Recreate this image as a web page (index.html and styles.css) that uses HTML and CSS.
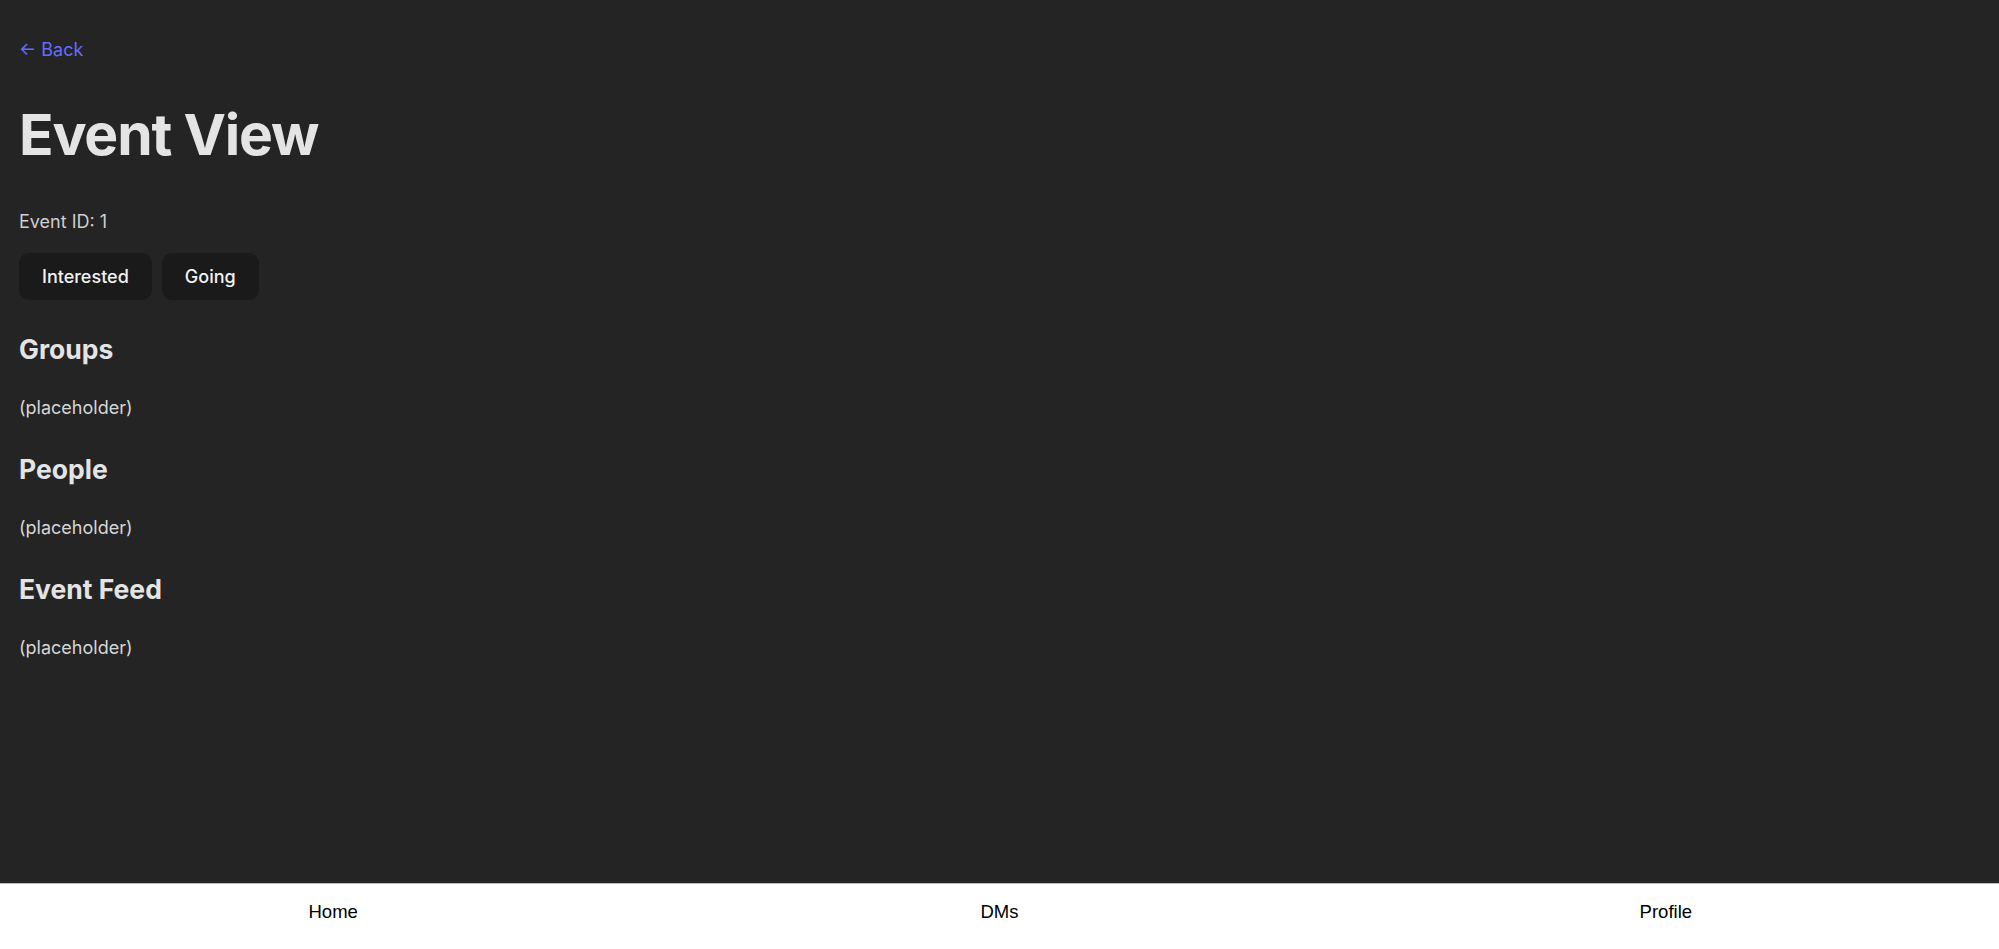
FILE: index.html
```html
<!DOCTYPE html>
<html lang="en">
<head>
<meta charset="utf-8">
<title>Event View</title>
<link rel="stylesheet" href="styles.css">
</head>
<body>
<main class="page">
  <a class="back" href="#"><span class="arrow">←</span> Back</a>
  <h1 class="title">Event View</h1>
  <p class="event-id">Event ID: 1</p>
  <div class="actions">
    <button class="btn">Interested</button>
    <button class="btn">Going</button>
  </div>
  <section class="section">
    <h2 class="section-title">Groups</h2>
    <p class="placeholder">(placeholder)</p>
  </section>
  <section class="section">
    <h2 class="section-title">People</h2>
    <p class="placeholder">(placeholder)</p>
  </section>
  <section class="section">
    <h2 class="section-title">Event Feed</h2>
    <p class="placeholder">(placeholder)</p>
  </section>
</main>
<nav class="tabbar">
  <a class="tab" href="#">Home</a>
  <a class="tab" href="#">DMs</a>
  <a class="tab" href="#">Profile</a>
</nav>
</body>
</html>
```
FILE: styles.css
```css
html, body {
  margin: 0;
  padding: 0;
  background: #242424;
  height: 100%;
}
body {
  font-family: Inter, "Noto Sans", sans-serif;
  color: rgba(255, 255, 255, 0.87);
  font-size: 18px;
  line-height: 1.5;
}
.page {
  padding: 36px 19px 100px 19px;
}
.back {
  display: inline-block;
  color: #646cff;
  text-decoration: none;
  font-size: 18px;
  font-weight: 400;
  line-height: 22px;
}
.title {
  margin: 40px 0 0 0;
  font-size: 57px;
  font-weight: 700;
  line-height: 64px;
  color: #e4e4e4;
  letter-spacing: -1.2px;
}
.event-id {
  margin: 43px 0 0 0;
  font-size: 18px;
  line-height: 24px;
  color: #cfcfcf;
}
.actions {
  display: flex;
  gap: 10px;
  margin-top: 19px;
}
.btn {
  font-family: inherit;
  font-size: 18px;
  font-weight: 500;
  color: #f2f2f2;
  background: #1a1a1a;
  border: 1px solid transparent;
  border-radius: 10px;
  height: 47px;
  padding: 0 22px;
}
.section {
  margin-top: 33px;
}
.section + .section {
  margin-top: 33.5px;
}
.section-title {
  margin: 0;
  font-size: 26.5px;
  font-weight: 700;
  line-height: 32px;
  color: #e4e4e4;
}
.placeholder {
  margin: 30.5px 0 0 0;
  font-size: 18px;
  line-height: 24px;
  color: #d6d6d6;
}
.tabbar {
  position: fixed;
  left: 0;
  right: 0;
  bottom: 0;
  height: 65px;
  background: #ffffff;
  border-top: 1px solid #bdbdbd;
  display: grid;
  grid-template-columns: 1fr 1fr 1fr;
  align-items: center;
}
.tab {
  text-align: center;
  color: #000;
  text-decoration: none;
  font-family: "Liberation Sans", Arial, sans-serif;
  font-size: 18.5px;
  padding-bottom: 9px;
}
```
